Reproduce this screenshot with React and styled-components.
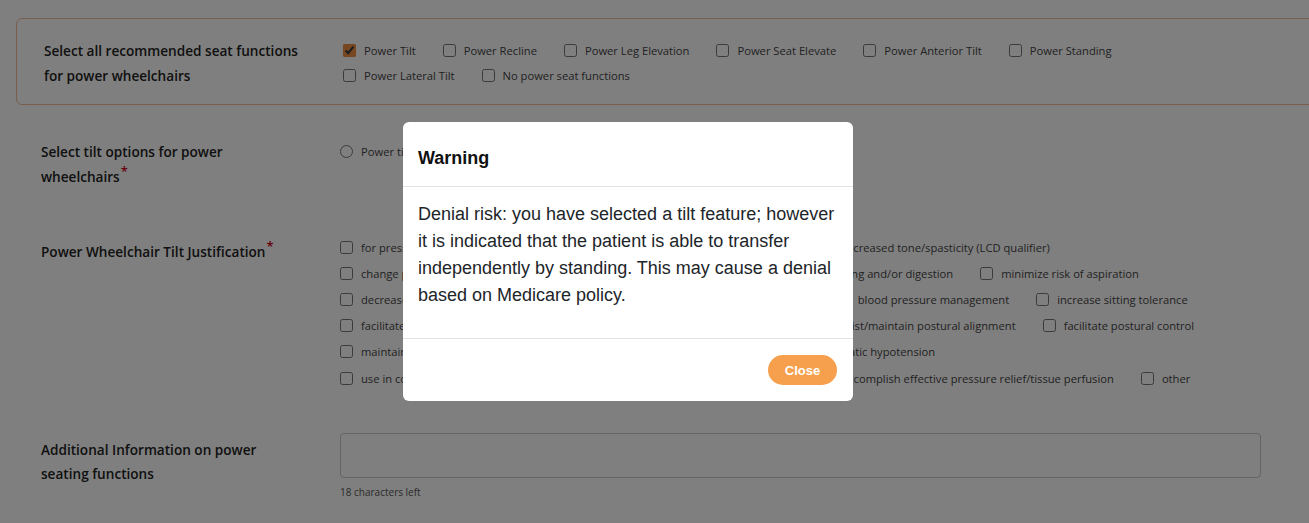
import styled, { createGlobalStyle } from 'styled-components';

const GlobalStyle = createGlobalStyle`
  html, body {
    margin: 0;
    background: #ffffff;
    overflow: hidden;
  }
  body {
    font-family: "Open Sans", "Noto Sans", sans-serif;
    color: #222;
  }
`;

const seatFunctions = [
  [
    { label: 'Power Tilt', checked: true },
    { label: 'Power Recline' },
    { label: 'Power Leg Elevation' },
    { label: 'Power Seat Elevate' },
    { label: 'Power Anterior Tilt' },
    { label: 'Power Standing' },
  ],
  [{ label: 'Power Lateral Tilt' }, { label: 'No power seat functions' }],
];

const justifications = [
  [
    'for pressure relief/unable to perform functional weight shift independently',
    'manage increased tone/spasticity (LCD qualifier)',
  ],
  [
    'change position for daily activities and social interactions',
    'improve breathing, swallowing and/or digestion',
    'minimize risk of aspiration',
  ],
  [
    'decrease pain and discomfort',
    'manage lower extremity edema and circulation',
    'blood pressure management',
    'increase sitting tolerance',
  ],
  [
    'facilitate transfers & caregiver care',
    'reposition the pelvis and trunk using gravity to assist/maintain postural alignment',
    'facilitate postural control',
  ],
  [
    'maintain head control and upright visual orientation for daily activity',
    'manage orthostatic hypotension',
  ],
  [
    'use in conjunction with power recline to prevent shearing',
    'tilt is required in order to accomplish effective pressure relief/tissue perfusion',
    'other',
  ],
];

const App = () => {
  return (
    <>
      <GlobalStyle />
      <Page>
        <HighlightBox>
          <FieldLabel>Select all recommended seat functions for power wheelchairs</FieldLabel>
          <Options>
            {seatFunctions.map((row, i) => (
              <OptionRow key={i} $height={25}>
                {row.map((opt) => (
                  <Option key={opt.label}>
                    <Checkbox type="checkbox" defaultChecked={!!opt.checked} />
                    <span>{opt.label}</span>
                  </Option>
                ))}
              </OptionRow>
            ))}
          </Options>
        </HighlightBox>

        <FormRow $gap={34}>
          <FieldLabel>
            Select tilt options for power wheelchairs<Required>*</Required>
          </FieldLabel>
          <Options>
            <OptionRow $height={25}>
              <Option>
                <Radio type="radio" name="tilt" />
                <span>Power tilt</span>
              </Option>
            </OptionRow>
          </Options>
        </FormRow>

        <FormRow $gap={45}>
          <FieldLabel $offset={5}>
            Power Wheelchair Tilt Justification<Required>*</Required>
          </FieldLabel>
          <Options>
            {justifications.map((row, i) => (
              <OptionRow key={i} $height={26.2}>
                {row.map((text) => (
                  <Option key={text}>
                    <Checkbox type="checkbox" />
                    <span>{text}</span>
                  </Option>
                ))}
              </OptionRow>
            ))}
          </Options>
        </FormRow>

        <FormRow $gap={42}>
          <FieldLabel $offset={5} $lineHeight={24}>
            Additional Information on power seating functions
          </FieldLabel>
          <div>
            <TextArea defaultValue="" />
            <Hint>18 characters left</Hint>
          </div>
        </FormRow>
      </Page>

      <Backdrop>
        <Modal>
          <ModalHeader>
            <ModalTitle>Warning</ModalTitle>
          </ModalHeader>
          <ModalBody>
            Denial risk: you have selected a tilt feature; however it is indicated that the
            patient is able to transfer independently by standing. This may cause a denial
            based on Medicare policy.
          </ModalBody>
          <ModalFooter>
            <CloseButton type="button">Close</CloseButton>
          </ModalFooter>
        </Modal>
      </Backdrop>
    </>
  );
};

const Page = styled.main`
  padding-top: 18px;
  width: 1340px;
`;

const HighlightBox = styled.section`
  display: grid;
  grid-template-columns: 299px 1fr;
  margin-left: 16px;
  padding: 19px 0 16px 27px;
  border: 1px solid #f2bd96;
  border-radius: 6px;
`;

const FormRow = styled.section`
  display: grid;
  grid-template-columns: 299px 1fr;
  margin-top: ${(p) => p.$gap}px;
  padding-left: 41px;
`;

const FieldLabel = styled.div`
  padding-top: ${(p) => p.$offset || 0}px;
  padding-right: 37px;
  font-size: 13.6px;
  font-weight: 600;
  line-height: ${(p) => p.$lineHeight || 25}px;
  color: #222;
`;

const Required = styled.sup`
  color: #d0021b;
  font-size: 13px;
  line-height: 0;
  margin-left: 1px;
`;

const Options = styled.div`
  display: flex;
  flex-direction: column;
`;

const OptionRow = styled.div`
  display: flex;
  align-items: center;
  height: ${(p) => p.$height}px;
  white-space: nowrap;
`;

const Option = styled.label`
  display: flex;
  align-items: center;
  gap: 8px;
  margin-right: 27px;
  font-size: 11.2px;
  color: #444;
`;

const Checkbox = styled.input`
  width: 13px;
  height: 13px;
  margin: 0;
  accent-color: #ef8f45;
`;

const Radio = styled.input`
  width: 13px;
  height: 13px;
  margin: 0;
  accent-color: #ef8f45;
`;

const TextArea = styled.textarea`
  display: block;
  box-sizing: border-box;
  width: 921px;
  height: 45px;
  margin: 0;
  border: 1px solid #c8c8c8;
  border-radius: 4px;
  resize: none;
  font-family: inherit;
`;

const Hint = styled.div`
  margin-top: 7px;
  font-size: 10px;
  line-height: 14px;
  color: #555;
`;

const Backdrop = styled.div`
  position: fixed;
  inset: 0;
  background: rgba(0, 0, 0, 0.5);
`;

const Modal = styled.div`
  position: absolute;
  top: 122px;
  left: 403px;
  width: 450px;
  background: #fff;
  border-radius: 6px;
  font-family: "Liberation Sans", Arial, sans-serif;
  color: #212529;
`;

const ModalHeader = styled.header`
  padding: 26px 15px 17px;
  border-bottom: 1px solid #e3e3e3;
`;

const ModalTitle = styled.h5`
  margin: 0;
  font-size: 18px;
  font-weight: bold;
  line-height: 21px;
  color: #111;
`;

const ModalBody = styled.div`
  padding: 14px 15px 29px;
  font-size: 18px;
  line-height: 27px;
`;

const ModalFooter = styled.footer`
  display: flex;
  justify-content: flex-end;
  padding: 16px;
  border-top: 1px solid #e3e3e3;
`;

const CloseButton = styled.button`
  width: 69px;
  height: 30px;
  border: none;
  border-radius: 15px;
  background: #f6a04d;
  color: #fff;
  font-family: "Liberation Sans", Arial, sans-serif;
  font-size: 13px;
  font-weight: bold;
  cursor: pointer;
`;

export default App;
